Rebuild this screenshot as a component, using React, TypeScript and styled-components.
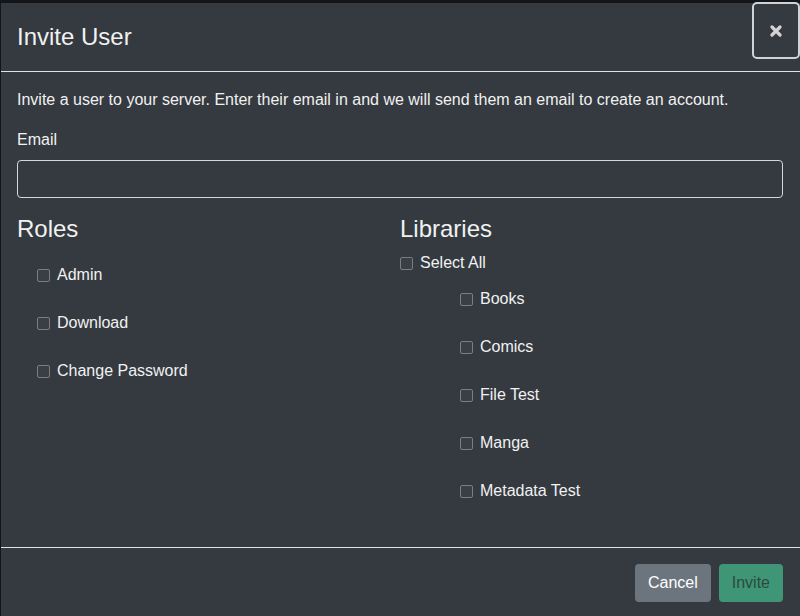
import React from 'react'
import styled, { createGlobalStyle } from 'styled-components'

const GlobalStyle = createGlobalStyle`
  html, body {
    margin: 0;
    padding: 0;
    background: #131518;
    font-family: "Liberation Sans", Arial, sans-serif;
    overflow: hidden;
  }
  * { box-sizing: border-box; }
`

const Modal = styled.div`
  margin: 3px 0 0 1px;
  width: 799px;
  height: 640px;
  background: #343a40;
  color: #f1f1f1;
  font-size: 16px;
  line-height: 24px;
`

const Header = styled.div`
  display: flex;
  align-items: flex-start;
  padding: 16px;
  border-bottom: 1px solid #dee2e6;
`

const Title = styled.h5`
  margin: 0;
  font-size: 24px;
  font-weight: 400;
  line-height: 36px;
`

const Close = styled.button`
  margin: -17px -16px -16px auto;
  width: 48px;
  height: 57px;
  background: transparent;
  border: 2px solid #cfd2d6;
  border-radius: 5px;
  color: #d4d4d4;
  padding: 0;
  display: flex;
  align-items: center;
  justify-content: center;
`

const Body = styled.div`
  padding: 16px 17px 16px 16px;
`

const Intro = styled.p`
  margin: 0 0 16px;
`

const Label = styled.label`
  display: block;
  margin-bottom: 8px;
`

const Input = styled.input`
  display: block;
  width: 100%;
  height: 38px;
  background: transparent;
  border: 1px solid #d3d6da;
  border-radius: 4px;
  color: #fff;
  margin-bottom: 16px;
`

const Columns = styled.div`
  display: grid;
  grid-template-columns: 1fr 1fr;
`

const Heading = styled.h4`
  margin: 0 0 8px;
  font-size: 24px;
  font-weight: 400;
  line-height: 29px;
`

const List = styled.ul<{ $indent: number }>`
  list-style: none;
  margin: 0 0 16px;
  padding-left: ${p => p.$indent}px;
`

const Item = styled.li`
  padding: 12px 0;
`

const Check = styled.label`
  display: flex;
  align-items: center;
  gap: 7px;
`

const Box = styled.input`
  appearance: none;
  margin: 0;
  width: 13px;
  height: 13px;
  border: 1px solid #7a7d82;
  border-radius: 2px;
  background: #3b3f45;
`

const Footer = styled.div`
  display: flex;
  justify-content: flex-end;
  gap: 8px;
  padding: 16px 17px 16px 16px;
  border-top: 1px solid #dee2e6;
`

const Button = styled.button<{ $variant: 'secondary' | 'primary' }>`
  height: 38px;
  padding: 0 13px;
  border: none;
  border-radius: 4px;
  font-family: "Liberation Sans", Arial, sans-serif;
  font-size: 16px;
  background: ${p => (p.$variant === 'primary' ? '#3e9677' : '#6c757d')};
  color: ${p => (p.$variant === 'primary' ? '#2c4a3e' : '#ffffff')};
`

const roles = ['Admin', 'Download', 'Change Password']
const libraries = ['Books', 'Comics', 'File Test', 'Manga', 'Metadata Test']

function CheckItem({ label }: { label: string }) {
  return (
    <Check>
      <Box type="checkbox" />
      {label}
    </Check>
  )
}

export default function App() {
  return (
    <>
      <GlobalStyle />
      <Modal>
        <Header>
          <Title>Invite User</Title>
          <Close aria-label="Close">
            <svg width="12" height="12" viewBox="0 0 12 12">
              <path d="M2 2 L10 10 M10 2 L2 10" stroke="currentColor" strokeWidth="3.2" strokeLinecap="round" />
            </svg>
          </Close>
        </Header>
        <Body>
          <Intro>Invite a user to your server. Enter their email in and we will send them an email to create an account.</Intro>
          <Label htmlFor="email">Email</Label>
          <Input id="email" type="email" />
          <Columns>
            <div>
              <Heading>Roles</Heading>
              <List $indent={20}>
                {roles.map(r => (
                  <Item key={r}><CheckItem label={r} /></Item>
                ))}
              </List>
            </div>
            <div>
              <Heading>Libraries</Heading>
              <CheckItem label="Select All" />
              <List $indent={60}>
                {libraries.map(l => (
                  <Item key={l}><CheckItem label={l} /></Item>
                ))}
              </List>
            </div>
          </Columns>
        </Body>
        <Footer>
          <Button $variant="secondary">Cancel</Button>
          <Button $variant="primary" disabled>Invite</Button>
        </Footer>
      </Modal>
    </>
  )
}
